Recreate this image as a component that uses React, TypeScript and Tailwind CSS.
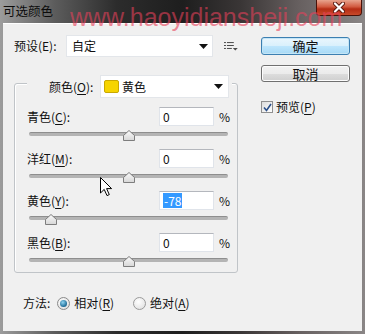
import React from 'react';

const Ul = ({ c }: { c: string }) => <span className="underline underline-offset-[2px]">{c}</span>;

const Slider: React.FC<{ value: number }> = ({ value }) => {
    const pos = ((value + 100) / 200) * 199;
    return (
        <div className="relative ml-[14px] w-[199px] h-[15px]">
            <div className="absolute left-0 right-0 top-[6px] h-[4px] rounded-full bg-[#b4b4b4] border-t border-[#8e8e8e]" />
            <svg className="absolute top-[4px]" style={{ left: pos - 6 }} width="12" height="11" viewBox="0 0 12 11">
                <defs>
                    <linearGradient id="thumbg" x1="0" y1="0" x2="0" y2="1">
                        <stop offset="0" stopColor="#fbfbfb" />
                        <stop offset="1" stopColor="#d6d6d6" />
                    </linearGradient>
                </defs>
                <path d="M6 0.5 L11.5 5.5 L11.5 10.5 L0.5 10.5 L0.5 5.5 Z" fill="url(#thumbg)" stroke="#7d7d7d" />
            </svg>
        </div>
    );
};

const Row: React.FC<{ label: string; mn: string; value: number; selected?: boolean }> = ({ label, mn, value, selected }) => (
    <div className="flex flex-col">
        <div className="flex items-center h-[19px]">
            <div className="flex-1 pl-[12px]">
                {label}(<Ul c={mn} />):
            </div>
            <div className="w-[55px] h-[19px] bg-white border border-[#e0e4ea] border-t-[#b4b7bd] flex items-center pl-[3px]">
                {selected ? (
                    <span className="bg-[#3399ff] text-white px-[1px] leading-[15px]">{value}</span>
                ) : (
                    <span>{value}</span>
                )}
            </div>
            <div className="w-[23px] pl-[5px]">%</div>
        </div>
        <Slider value={value} />
    </div>
);

const App: React.FC = () => {
    const rows = [
        { label: '青色', mn: 'C', value: 0 },
        { label: '洋红', mn: 'M', value: 0 },
        { label: '黄色', mn: 'Y', value: -78, selected: true },
        { label: '黑色', mn: 'B', value: 0 },
    ];
    return (
        <div className="relative w-[365px] h-[334px] overflow-hidden flex flex-col bg-[linear-gradient(to_right,#9c9c9c_0%,#5c5c5c_15%,#2c2c2c_32%,#1e1e1e_50%,#3a3636_66%,#676060_82%,#8a8686_100%)] font-['Noto_Sans_CJK_SC','Noto_Sans',sans-serif] text-[12px] text-[#111]">
            {/* title bar */}
            <div className="relative h-[23px] flex items-start shrink-0">
                <div className="pl-[3px] pt-[2px] text-[12.5px] text-[#0c0c0c] leading-[18px]">可选颜色</div>
                <div className="ml-auto mr-[3px] w-[46px] h-[16px] rounded-b-[4px] border border-t-0 border-[#4a1208] bg-[linear-gradient(to_bottom,#e8a48e_0%,#d25a40_45%,#b52c14_60%,#c84a2a_100%)] flex items-center justify-center">
                    <svg width="12" height="11" viewBox="0 0 12 11">
                        <path d="M2 1.5 L10 9.5 M10 1.5 L2 9.5" stroke="#5a1a10" strokeWidth="4" strokeLinecap="round" />
                        <path d="M2 1.5 L10 9.5 M10 1.5 L2 9.5" stroke="#ffffff" strokeWidth="2.2" strokeLinecap="round" />
                    </svg>
                </div>
            </div>

            {/* body */}
            <div className="flex-1 mx-[3px] mb-[3px] bg-[#f0f0f0] border-t border-white flex flex-col">
                <div className="flex">
                    {/* left column */}
                    <div className="w-[224px] ml-[11px] flex flex-col">
                        <div className="mt-[11px] flex items-center h-[22px]">
                            <div className="w-[53px]">预设(E):</div>
                            <div className="w-[150px] h-[22px] bg-white border border-[#e3e6ea] flex items-center pl-[5px] pr-[4px]">
                                <span>自定</span>
                                <svg className="ml-auto" width="9" height="5" viewBox="0 0 9 5"><path d="M0 0 H9 L4.5 5 Z" fill="#111" /></svg>
                            </div>
                            <svg className="ml-[11px]" width="14" height="10" viewBox="0 0 14 10">
                                <g fill="#4a4a4a">
                                    <rect x="0" y="1" width="2" height="1" />
                                    <rect x="3" y="1" width="7" height="1" />
                                    <rect x="0" y="4" width="2" height="1" />
                                    <rect x="3" y="4" width="7" height="1" />
                                    <rect x="0" y="7" width="2" height="1" />
                                    <rect x="3" y="7" width="5" height="1" />
                                    <path d="M9 7 H14 L11.5 9.5 Z" />
                                </g>
                            </svg>
                        </div>

                        {/* group box */}
                        <div className="mt-[26px] w-[224px] border border-[#c0c4c8] rounded-[3px] shadow-[inset_1px_1px_0_#ffffff] flex flex-col pb-[5px]">
                            <div className="-mt-[9px] ml-[12px] w-fit h-[23px] bg-[#f0f0f0] pl-[22px] pr-[3px] flex items-center gap-[4px]">
                                <div className="w-[47px]">颜色(<Ul c="O" />):</div>
                                <div className="w-[129px] h-[23px] bg-white border border-[#e3e6ea] flex items-center pl-[3px] pr-[5px]">
                                    <div className="w-[15px] h-[13px] rounded-[2px] bg-[#f6d400] border border-[#c9a800]" />
                                    <span className="ml-[3px]">黄色</span>
                                    <svg className="ml-auto" width="9" height="5" viewBox="0 0 9 5"><path d="M0 0 H9 L4.5 5 Z" fill="#111" /></svg>
                                </div>
                            </div>
                            <div className="mt-[9px] flex flex-col gap-[8px]">
                                {rows.map((r) => (
                                    <Row key={r.mn} {...r} />
                                ))}
                            </div>
                        </div>
                    </div>

                    {/* right column */}
                    <div className="ml-[23px] w-[89px] flex flex-col">
                        <div className="mt-[13px] h-[18px] rounded-[3px] border border-[#3c7fb1] bg-[linear-gradient(to_bottom,#eaf6fd_0%,#d9f0fc_50%,#bee6fd_51%,#a7d9f5_100%)] shadow-[inset_0_0_0_1px_#c4e5f6] flex items-center justify-center text-[13px]">
                            确定
                        </div>
                        <div className="mt-[10px] h-[17px] rounded-[3px] border border-[#707070] bg-[linear-gradient(to_bottom,#f2f2f2_0%,#ebebeb_50%,#dddddd_51%,#cfcfcf_100%)] shadow-[inset_0_0_0_1px_#fcfcfc] flex items-center justify-center text-[13px]">
                            取消
                        </div>
                        <div className="mt-[16px] flex items-center gap-[3px]">
                            <div className="w-[12px] h-[12px] border border-[#8f8f8f] bg-[linear-gradient(135deg,#dcdcdc,#ffffff)] flex items-center justify-center">
                                <svg width="9" height="9" viewBox="0 0 9 9"><path d="M1 4.5 L3.5 7.5 L8 1" stroke="#2a4f8a" strokeWidth="1.6" fill="none" /></svg>
                            </div>
                            <span>预览(<Ul c="P" />)</span>
                        </div>
                    </div>
                </div>

                {/* method */}
                <div className="mt-[21px] ml-[20px] flex items-center h-[18px]">
                    <span>方法:</span>
                    <div className="ml-[7px] w-[13px] h-[13px] rounded-full border border-[#8a8a8a] bg-[radial-gradient(circle_at_40%_35%,#ffffff,#d8d8d8)] flex items-center justify-center">
                        <div className="w-[7px] h-[7px] rounded-full bg-[radial-gradient(circle_at_40%_35%,#8fd3f0,#1d6b96_70%,#0f4a6e)]" />
                    </div>
                    <span className="ml-[4px]">相对(<Ul c="R" />)</span>
                    <div className="ml-[19px] w-[13px] h-[13px] rounded-full border border-[#9a9a9a] bg-[radial-gradient(circle_at_40%_35%,#ffffff,#dcdcdc)]" />
                    <span className="ml-[4px]">绝对(<Ul c="A" />)</span>
                </div>
            </div>

            {/* watermark */}
            <div className="absolute left-[70px] top-[3px] font-['Liberation_Sans',sans-serif] text-[25px] leading-[28px] text-[#e8405a]/60 pointer-events-none">
                www.haoyidiansheji.com
            </div>

            {/* mouse cursor */}
            <svg className="absolute left-[100px] top-[177px]" width="13" height="20" viewBox="0 0 13 20">
                <path d="M0.5 0.5 L0.5 16 L4.2 12.4 L7 18.6 L9.3 17.6 L6.6 11.6 L11.6 11.6 Z" fill="#fff" stroke="#000" strokeWidth="1" strokeLinejoin="round" />
            </svg>
        </div>
    );
};

export default App;
